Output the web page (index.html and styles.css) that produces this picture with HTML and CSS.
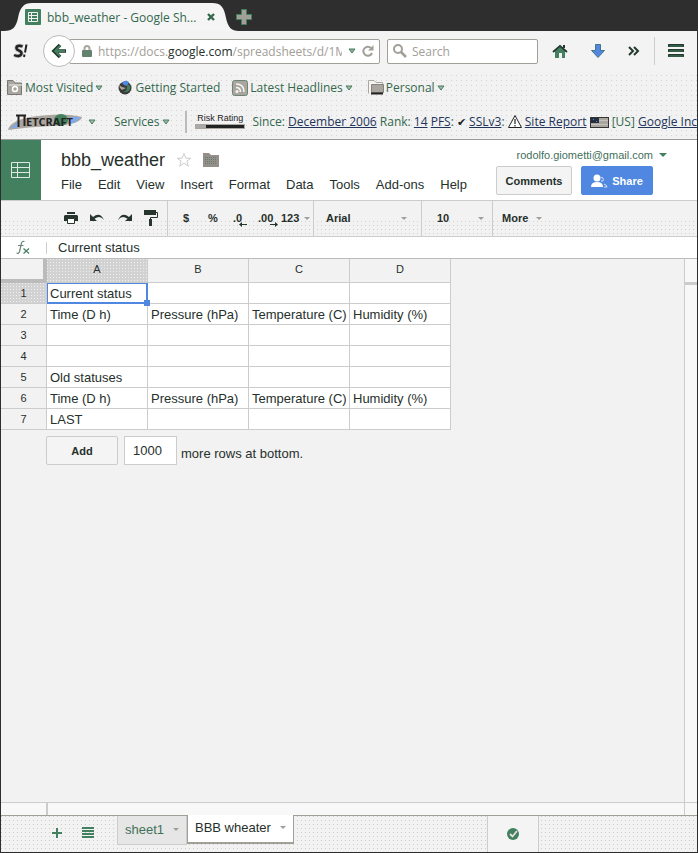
FILE: index.html
```html
<!DOCTYPE html>
<html lang="en">
<head>
<meta charset="utf-8">
<title>bbb_weather - Google Sheets</title>
<link rel="stylesheet" href="styles.css">
</head>
<body>
<div class="window">
  <header class="browser">
    <div class="tabstrip">
      <div class="tab">
        <svg class="tab-shape" width="235" height="28" viewBox="0 0 235 28"><path fill="#f5f5f5" d="M0 28C9 28 12 24 14 15C16 4 20 0 28 0H208C217 0 220 4 222 15C224 24 227 28 235 28Z"/></svg>
        <svg class="tab-icon" width="16" height="16" viewBox="0 0 16 16"><rect width="16" height="16" rx="1" fill="#42805f"/><path d="M3.500 3.500h9v9h-9zM3.500 6.500h9M3.500 9.500h9M6.500 3.500v9" fill="none" stroke="#f2f2f2"/></svg>
        <span class="tab-title">bbb_weather - Google Sh...</span>
        <button class="plain" aria-label="Close tab"><svg width="8" height="8" viewBox="0 0 8 8"><path d="M1 1L7 7M7 1L1 7" stroke="#34684d" stroke-width="2.400"/></svg></button>
      </div>
      <button class="plain new-tab" aria-label="New tab"><svg width="16" height="16" viewBox="0 0 16 16"><path d="M5.500.500h5v5h5v5h-5v5h-5v-5h-5v-5h5z" fill="#a29e98" stroke="#42805f"/></svg></button>
    </div>
    <div class="navbar">
      <button class="plain s-button" aria-label="S!"><svg width="16" height="16" viewBox="0 0 16 16"><path d="M10 3.500C6 2 3 3 3.500 5.500S9 7.500 8.500 10.500S4 13.500 1.500 12" fill="none" stroke="#bbb" stroke-width="4"/><path d="M9.500 3.500C6 2 3 3 3.500 5.500S9 7.500 8.500 10.500S4 13.500 1 12" fill="none" stroke="#222" stroke-width="2.400"/><path d="M13.500 1.500L12 9.500M11.500 11.500L11 14" stroke="#222" stroke-width="2"/></svg></button>
      <button class="back" aria-label="Back"><svg width="16" height="16" viewBox="0 0 16 16"><path d="M9 2L3 8L9 14M3 8H15" fill="none" stroke="#24392e" stroke-width="3.600"/><path d="M9 3L4 8L9 13M4 8H14" fill="none" stroke="#42805f" stroke-width="1.800"/></svg></button>
      <div class="urlbar">
        <svg width="10" height="12" viewBox="0 0 10 12"><path d="M2.500 6V3.500a2.500 2.500 0 0 1 5 0V6" fill="none" stroke="#aaa69f" stroke-width="2"/><rect y="5" width="10" height="7" rx="1" fill="#65826f"/></svg>
        <div class="url" role="textbox" aria-label="Address">https://docs.<b>google.com</b>/spreadsheets/d/1M</div>
        <svg width="8" height="6" viewBox="0 0 8 6"><path d="M1 1H7L4 5Z" fill="#9fa69f" stroke="#42805f"/></svg>
        <button class="plain" aria-label="Reload"><svg width="12" height="12" viewBox="0 0 12 12"><path d="M9 3A4.500 4.500 0 1 0 10 8" fill="none" stroke="#a29e98" stroke-width="2"/><path d="M11.500 0V5.500H6z" fill="#a29e98"/></svg></button>
      </div>
      <div class="search">
        <svg width="14" height="14" viewBox="0 0 14 14"><circle cx="5" cy="5" r="4" fill="none" stroke="#a29e98" stroke-width="2"/><path d="M8 8L13 13" stroke="#a29e98" stroke-width="2.500"/></svg>
        <input type="text" placeholder="Search" aria-label="Search">
      </div>
      <div class="nav-icons">
        <button class="plain" aria-label="Home"><svg width="16" height="15" viewBox="0 0 16 15"><path d="M3 7L8 3L13 7V14H10V9H7V14H3Z" fill="#42805f"/><path d="M1 8L8 2L15 8" fill="none" stroke="#24392e" stroke-width="1.800"/><path d="M11 1h2v3h-2z" fill="#24392e"/></svg></button>
        <button class="plain" aria-label="Downloads"><svg width="14" height="14" viewBox="0 0 14 14"><path d="M4.500.500h5V6.500h4L7 13.500L.500 6.500h4z" fill="#5087e0" stroke="#42748b"/></svg></button>
        <button class="plain" aria-label="More tools"><svg width="12" height="10" viewBox="0 0 12 10"><path d="M1 1L5 5L1 9M6 1L10 5L6 9" fill="none" stroke="#24392e" stroke-width="2"/></svg></button>
      </div>
      <div class="menu-holder">
        <button class="plain" aria-label="Menu"><svg width="16" height="14" viewBox="0 0 16 14"><path d="M1 1.500H15M1 6.500H15M1 11.500H15" stroke="#24392e" stroke-width="3" stroke-linecap="round"/><path d="M1 2H15M1 7H15M1 12H15" stroke="#42805f"/></svg></button>
      </div>
    </div>
    <nav class="bookmarks" aria-label="Bookmarks">
      <a href="#" class="mark"><svg width="16" height="15" viewBox="0 0 16 15"><path d="M.500 14.500V.500H6L8 3H14.500V14.500Z" fill="#aaa69f" stroke="#777"/><path d="M2 5H15" stroke="#eee"/><circle cx="8" cy="9" r="2.500" fill="none" stroke="#fff" stroke-width="1.500"/></svg>Most Visited <svg class="caret"><use href="#tri"/></svg></a>
      <a href="#" class="mark started"><svg width="14" height="15" viewBox="0 0 14 15"><circle cx="7" cy="8" r="6.500" fill="#3a3a3a"/><path d="M4 3Q7-1 11 2L9 6L6 5Z" fill="#5087e0"/><path d="M9 4Q13 5 12 9Q10 13 5 12Q9 11 9 8Z" fill="#42805f"/><path d="M1 5L4 7L8 8L4 10L2 8Z" fill="#aaa69f"/></svg>Getting Started</a>
      <a href="#" class="mark"><svg width="16" height="16" viewBox="0 0 16 16"><rect x=".5" y=".5" width="15" height="15" rx="2" fill="#aaa69f" stroke="#6c8476"/><path d="M4 4Q12 4 12 12M4 7.500Q8.500 7.500 8.500 12" fill="none" stroke="#f5f5f5" stroke-width="1.600"/><circle cx="5" cy="11.500" r="1.500" fill="#f5f5f5"/></svg>Latest Headlines <svg class="caret"><use href="#tri"/></svg></a>
      <a href="#" class="mark"><svg width="16" height="15" viewBox="0 0 16 15"><path d="M.500 13.500V.500H6L8 2.500H14.500V5" fill="#f5f5f5" stroke="#aaa69f"/><path d="M3.500 4.500H15.500V12.500H3.500Z" fill="#aaa69f" stroke="#87847e"/><path d="M3 13.500H15" stroke="#222" stroke-width="2"/></svg>Personal <svg class="caret"><use href="#tri"/></svg></a>
    </nav>
    <div class="netcraft">
      <svg class="net-logo" width="74" height="18" viewBox="0 0 74 18" role="img" aria-label="Netcraft"><path d="M0 17Q2 8 22 4Q56-1 74 4Q72 12 44 13Q20 14 0 17Z" fill="#aaa69f"/><path d="M1 16L10 9V14ZM62 4L73 4L68 9L61 11Z" fill="#82a8e8"/><ellipse cx="53" cy="7" rx="7" ry="6" fill="#42805f"/><path d="M8 2.500H18M10.500 3V14M16.500 3V13" fill="none" stroke="#222" stroke-width="2"/><text x="18" y="13" class="logo-text">ETCRAFT</text></svg>
      <svg class="caret net-caret"><use href="#tri"/></svg>
      <span class="services">Services <svg class="caret"><use href="#tri"/></svg></span>
      <span class="divider"></span>
      <span class="risk">Risk Rating<span class="risk-bar"></span></span>
      <span class="facts">Since: <a href="#">December 2006</a> Rank: <a href="#">14</a> <a href="#">PFS</a>: <span class="tick">✔</span> <a href="#">SSLv3</a>: <svg class="warn" width="14" height="13" viewBox="0 0 14 13"><path d="M7 .500L13.500 12.500H.500Z" fill="#fff" stroke="#222"/><path d="M7 4V9M7 10V11.500" stroke="#222" stroke-width="1.200"/></svg> <a href="#">Site Report</a> <svg class="flag" width="19" height="11" viewBox="0 0 19 11"><rect x=".5" y=".5" width="18" height="10" fill="#aaa69f" stroke="#333"/><path d="M9 3.500H18M1 7.500H18" stroke="#c4c1bc"/><path d="M1 1H9V6H1Z" fill="#24303e"/><path d="M3 2.500H4M6 4.500H7" stroke="#5087e0"/></svg> [US] <a href="#">Google Inc</a></span>
    </div>
  </header>

  <section class="doc-header">
    <div class="home-box"><svg width="20" height="17" viewBox="0 0 20 17"><path d="M.500.500h18v15h-18zM.500 5.500h18M.500 10.500h18M6.500.500v15" fill="none" stroke="#dfe9e3"/></svg></div>
    <div class="doc-main">
      <div class="title-row">
        <h1>bbb_weather</h1>
        <svg width="16" height="16" viewBox="0 0 16 16"><path d="M8 1.500L9.800 6.200H15L10.800 9.200L12.400 14.200L8 11.200L3.600 14.200L5.200 9.200L1 6.200H6.200Z" fill="#fff" stroke="#ccc"/></svg>
        <svg width="16" height="14" viewBox="0 0 16 14"><path d="M0 0H6L8 2H16V14H0Z" fill="#948f89"/><path d="M2 4.500H14M2 6.500H14M2 8.500H14M2 10.500H14" stroke="#5f7c6c" stroke-dasharray="1 1"/></svg>
      </div>
      <nav class="menus"><a href="#">File</a><a href="#">Edit</a><a href="#">View</a><a href="#">Insert</a><a href="#">Format</a><a href="#">Data</a><a href="#">Tools</a><a href="#">Add-ons</a><a href="#">Help</a></nav>
    </div>
    <div class="account">
      <button class="plain mail">rodolfo.giometti@gmail.com <i class="down green"></i></button>
      <div class="actions">
        <button class="btn comments">Comments</button>
        <button class="btn share"><svg width="17" height="14" viewBox="0 0 17 14"><circle cx="6" cy="4" r="3.500" fill="#fff"/><path d="M0 13Q0 8 6 8T12 13Z" fill="#fff"/><path d="M10 3.500Q13 3 12 7L10 7M13 10Q16 11 16 13H13" fill="none" stroke="#d7e2f7"/></svg>Share</button>
      </div>
    </div>
  </section>

  <div class="toolbar">
    <div class="group icons">
      <button class="plain" aria-label="Print"><svg width="14" height="12" viewBox="0 0 14 12"><path d="M3 0H11V2H3ZM1 3H13L14 4V9H11V7H3V9H0V4Z" fill="#26352d"/><path d="M3.500 6.500H10.500V11.500H3.500Z" fill="#fff" stroke="#26352d"/></svg></button>
      <button class="plain" aria-label="Undo"><svg width="15" height="10" viewBox="0 0 15 10"><path d="M0 1V8H7L4.500 5.700Q10 1.500 14 7Q10-1.500 3 4Z" fill="#26352d"/></svg></button>
      <button class="plain" aria-label="Redo"><svg width="15" height="10" viewBox="0 0 15 10"><path d="M15 1V8H8L10.500 5.700Q5 1.500 1 7Q5-1.500 12 4Z" fill="#26352d"/></svg></button>
      <button class="plain" aria-label="Paint format"><svg width="14" height="16" viewBox="0 0 14 16"><path d="M0 0H12V5H0Z" fill="#26352d"/><path d="M12 2.500H13.500V7.500H6.500V10" fill="none" stroke="#26352d"/><path d="M5 9H8V16H5Z" fill="#26352d"/></svg></button>
    </div>
    <div class="group formats">
      <button class="plain short">$</button>
      <button class="plain short">%</button>
      <button class="plain short dec">.0<svg width="8" height="5" viewBox="0 0 8 5"><path d="M0 2.500L3 0V2H8V3H3V5Z" fill="#26352d"/></svg></button>
      <button class="plain short dec">.00<svg width="8" height="5" viewBox="0 0 8 5"><path d="M8 2.500L5 0V2H0V3H5V5Z" fill="#26352d"/></svg></button>
      <button class="plain num">123<i class="down"></i></button>
    </div>
    <div class="group font"><button class="plain">Arial<i class="down"></i></button></div>
    <div class="group size"><button class="plain">10<i class="down"></i></button></div>
    <div class="group more"><button class="plain">More<i class="down"></i></button></div>
  </div>

  <div class="formula">
    <svg width="14" height="16" viewBox="0 0 14 16"><path d="M8.500 1.500Q6 .500 5.300 4L3.500 11.500Q3 14 .500 13M2 5.500H7.500" fill="none" stroke="#6c8476" stroke-width="1.200"/><path d="M7.500 8.500L13 13.500M13 8.500L7.500 13.500" stroke="#42805f" stroke-width="1.200"/></svg>
    <input type="text" value="Current status" aria-label="Formula">
  </div>

  <main class="sheet-area">
    <div class="sheet">
      <table>
        <thead><tr><th class="corner"></th><th class="active">A</th><th>B</th><th>C</th><th>D</th></tr></thead>
        <tbody>
          <tr><th class="active">1</th><td class="selected">Current status</td><td></td><td></td><td></td></tr>
          <tr><th>2</th><td>Time (D h)</td><td>Pressure (hPa)</td><td>Temperature (C)</td><td>Humidity (%)</td></tr>
          <tr><th>3</th><td></td><td></td><td></td><td></td></tr>
          <tr><th>4</th><td></td><td></td><td></td><td></td></tr>
          <tr><th>5</th><td>Old statuses</td><td></td><td></td><td></td></tr>
          <tr><th>6</th><td>Time (D h)</td><td>Pressure (hPa)</td><td>Temperature (C)</td><td>Humidity (%)</td></tr>
          <tr><th>7</th><td>LAST</td><td></td><td></td><td></td></tr>
        </tbody>
      </table>
      <div class="add-rows">
        <button class="btn add">Add</button>
        <input id="rows" type="text" value="1000">
        <label for="rows">more rows at bottom.</label>
      </div>
    </div>
    <div class="vscroll"><span></span></div>
  </main>
  <div class="hscroll"><span class="hleft"></span><span class="hmid"></span><span class="hright"></span></div>

  <footer class="sheets">
    <button class="plain" aria-label="Add sheet"><svg width="10" height="10" viewBox="0 0 10 10"><path d="M5 0V10M0 5H10" stroke="#42805f" stroke-width="2"/></svg></button>
    <button class="plain all" aria-label="All sheets"><svg width="12" height="11" viewBox="0 0 12 11"><path d="M0 1H12M0 4H12M0 7H12M0 10H12" stroke="#42805f" stroke-width="2"/></svg></button>
    <button class="sheet-tab">sheet1<i class="down"></i></button>
    <button class="sheet-tab current">BBB wheater<i class="down"></i></button>
    <div class="status"><svg width="12" height="12" viewBox="0 0 12 12"><circle cx="6" cy="6" r="6" fill="#42805f"/><path d="M3 6L5.500 8.500L10 3" fill="none" stroke="#e8ded8" stroke-width="1.800"/></svg></div>
  </footer>
</div>
<svg class="defs" aria-hidden="true"><symbol id="tri" viewBox="0 0 8 6"><path d="M1 1H7L4 5Z" fill="#a8b5ac" stroke="#42805f"/></symbol></svg>
</body>
</html>
```
FILE: styles.css
```css
* { box-sizing: border-box; }
body { margin: 0; font-family: "Liberation Sans", Arial, sans-serif; font-size: 13px; color: #26302b; background: #f2f2f2; }
svg { flex: none; display: block; }
a { color: inherit; text-decoration: none; }
button, input { font: inherit; color: inherit; }
.plain { display: flex; align-items: center; padding: 0; border: 0; background: none; }
.defs { position: absolute; width: 0; height: 0; }
.window { display: flex; flex-direction: column; min-height: 100vh; overflow: hidden; border: 1px solid #2e2e2e; border-top: 0; }

/* Browser chrome */
.browser { font-family: "Open Sans", "Noto Sans", sans-serif; font-size: 12px; color: #34684d; border-bottom: 1px solid #999; background: radial-gradient(circle at 0 0, #d4d4d4 1px, transparent 1px) 0 0 / 5px 5px #f2f2f2; }
.tabstrip { display: flex; align-items: center; height: 31px; padding: 3px 0 0 3px; background: #2e2e2e; }
.tab { position: relative; display: flex; align-items: center; width: 235px; height: 28px; padding: 0 24px 0 21px; }
.tab-shape { position: absolute; left: 0; top: 0; }
.tab-icon, .tab-title, .tab .plain { position: relative; }
.tab-title { flex: 1; margin-left: 6px; white-space: nowrap; }
.new-tab { margin-left: -3px; }
.navbar { display: flex; align-items: center; height: 40px; padding: 0 13px 0 12px; background: #f3f3f3; }
.back { display: flex; align-items: center; justify-content: center; flex: none; width: 32px; height: 32px; margin-left: 14px; padding: 0; border: 1px solid #bbb; border-radius: 50%; background: #fff; z-index: 1; }
.urlbar, .search { display: flex; align-items: center; height: 25px; background: #fff; border: 1px solid #a29e98; border-radius: 2px; }
.urlbar { flex: 21 1 0; min-width: 0; gap: 6px; margin-left: -6px; padding: 0 5px 0 12px; }
.url { flex: 1; min-width: 0; overflow: hidden; white-space: nowrap; color: #a29e98; }
.url b { font-weight: 400; color: #26302b; }
.search { flex: 10 1 0; min-width: 0; margin-left: 7px; padding: 0 5px; gap: 5px; }
.search input { width: 100%; min-width: 0; border: 0; padding: 0; background: none; }
.search input::placeholder { color: #a29e98; opacity: 1; }
.nav-icons { display: flex; align-items: center; gap: 23px; padding: 0 14px; }
.menu-holder { padding: 7px 0 7px 13px; border-left: 1px solid #ccc; }
.bookmarks { display: flex; align-items: center; height: 33px; padding-left: 6px; white-space: nowrap; }
.mark { display: flex; align-items: center; gap: 2px; margin-right: 15px; }
.started { gap: 3px; margin-right: 12px; }
.caret { width: 8px; height: 6px; }
.netcraft { display: flex; align-items: center; height: 35px; padding-left: 7px; white-space: nowrap; }
.net-caret { margin: 0 18px 0 6px; }
.logo-text { font-family: "Open Sans", sans-serif; font-size: 11px; font-weight: 700; fill: #222; }
.services { display: flex; align-items: center; gap: 3px; }
.divider { width: 2px; height: 22px; margin: 0 8px 0 15px; background: #bbb; }
.risk { width: 54px; font-family: "Liberation Sans", sans-serif; font-size: 9px; line-height: 9px; text-align: center; color: #222; }
.risk-bar { display: block; height: 5px; margin-top: 1px; border: 1px solid #aaa69f; background: linear-gradient(90deg, #aaa 20%, #222 20%); }
.facts { margin-left: 7px; }
.facts a { color: #22345a; text-decoration: underline; }
.facts svg { display: inline-block; vertical-align: -2px; }
.tick { color: #222; font-size: 11px; }

/* Document header */
.doc-header { display: flex; height: 61px; background: #fff; border-bottom: 1px solid #ccc; }
.home-box { display: flex; align-items: center; justify-content: center; width: 40px; background: #42805f; }
.doc-main { flex: 1; padding: 9px 0 0 20px; }
.title-row { display: flex; align-items: center; gap: 11px; height: 22px; }
h1 { margin: 0; font-size: 18px; font-weight: 400; }
.menus { display: flex; gap: 16px; margin-top: 6px; line-height: 16px; white-space: nowrap; }
.account { padding: 6px 30px 0 0; }
.mail { gap: 6px; margin-left: auto; height: 17px; font-size: 11px; color: #42705a; }
.actions { display: flex; gap: 9px; margin: 3px 14px 0 0; }
.btn { display: flex; align-items: center; justify-content: center; height: 29px; padding: 0; border: 1px solid #ccc; border-radius: 2px; background: #f4f4f4; font-size: 11px; font-weight: 700; }
.comments { width: 76px; }
.share { width: 72px; gap: 4px; border-color: #5087e0; background: #5087e0; color: #fff; }
.down { flex: none; width: 0; height: 0; border: 3px solid transparent; border-top-color: #a29e98; border-bottom: 0; }
.down.green { border-width: 4px 4px 0; border-top-color: #42805f; }

/* Toolbar */
.toolbar { display: flex; height: 36px; padding-bottom: 1px; border-bottom: 1px solid #ccc; background: linear-gradient(#f2f2f2 50%, transparent 50%), radial-gradient(circle at 0 0, #d0d0d0 1px, transparent 1px) 0 0 / 4px 4px #f2f2f2; font-size: 11px; font-weight: 700; }
.group { display: flex; align-items: center; margin-bottom: -1px; padding-bottom: 1px; border-right: 1px solid #ccc; }
.icons { width: 167px; padding-left: 63px; gap: 12px; }
.formats { width: 146px; padding-left: 15px; }
.short { width: 24px; }
.short + .short { margin-left: 1px; }
.dec svg { align-self: flex-end; margin: 0 0 -3px -3px; }
.num { margin-left: -1px; gap: 5px; }
.font { width: 108px; padding-left: 12px; }
.size { width: 71px; padding-left: 15px; }
.font .plain, .size .plain { flex: 1; justify-content: space-between; }
.font .plain { padding-right: 14px; }
.size .plain { padding-right: 8px; }
.more { padding-left: 9px; border-right: 0; }
.more .plain { gap: 8px; }

.formula { display: flex; align-items: center; height: 22px; padding-left: 15px; gap: 16px; background: #fff; border-bottom: 1px solid #bbb; }
.formula input { flex: 1; height: 12px; padding: 0 0 0 11px; border: 0; border-left: 1px solid #ccc; }

/* Grid */
.sheet-area { flex: 1; display: flex; }
.sheet { flex: 1; }
table { border-collapse: separate; border-spacing: 0; table-layout: fixed; width: 450px; }
th, td { height: 21px; padding: 0; border-right: 1px solid #ccc; border-bottom: 1px solid #ccc; white-space: nowrap; }
th { font-size: 11px; font-weight: 400; background: #f2f2f2; }
thead th { height: 24px; padding-bottom: 3px; }
tbody th { padding-bottom: 1px; }
thead th:first-child { width: 46px; }
th.corner { border-right: 4px solid #bbb; border-bottom: 4px solid #bbb; }
th.active { background: radial-gradient(circle at 0 0, #eee 1px, transparent 1px) 0 0 / 3px 3px #d2d2d2; }
td { position: relative; padding-left: 3px; background: #fff; }
td.selected { outline: 1px solid #5087e0; outline-offset: -1px; border-right: 2px solid #5087e0; border-bottom: 2px solid #5087e0; padding-top: 1px; }
td.selected::after { content: ""; position: absolute; right: -4px; bottom: -4px; z-index: 1; width: 6px; height: 6px; background: #5087e0; }
.add-rows { display: flex; height: 29px; margin: 6px 0 0 45px; }
.add { width: 72px; }
.add-rows input { width: 53px; margin: 0 4px 0 6px; padding: 0 8px; border: 1px solid #ccc; background: #fff; }
.add-rows label { align-self: flex-end; line-height: 22px; }
.vscroll { width: 13px; border-left: 1px solid #ccc; background: #f8f8f8; }
.vscroll span { display: block; height: 3px; margin-top: 23px; background: #ccc; }
.hscroll { display: flex; height: 13px; border-top: 1px solid #ccc; background: #f8f8f8; }
.hleft { width: 47px; border-right: 2px solid #ccc; }
.hmid { flex: 1; }
.hright { width: 13px; border-left: 1px solid #ccc; }

/* Sheet tabs */
.sheets { display: flex; align-items: center; height: 37px; padding-left: 51px; border-top: 1px solid #a29e98; background: radial-gradient(circle at 0 0, #ccc 1px, transparent 1px) 0 0 / 4px 4px #f2f2f2; }
.sheets .all { margin: 0 23px 0 20px; }
.sheets > .plain { padding-bottom: 3px; }
.sheet-tab { display: flex; align-items: center; align-self: flex-start; height: 29px; width: 70px; padding: 0 7px 2px; justify-content: space-between; border: 1px solid #ccc; border-top: 0; background: #e6e6e6; color: #42705a; }
.sheet-tab.current { width: 107px; margin-top: -1px; background: #fff; border-color: #a29e98; border-bottom-width: 2px; color: #26302b; }
.status { display: flex; align-items: center; justify-content: center; align-self: stretch; width: 52px; margin: 0 158px 0 auto; border: 1px solid #ccc; border-width: 0 1px; background: #f4f4f4; }
```
